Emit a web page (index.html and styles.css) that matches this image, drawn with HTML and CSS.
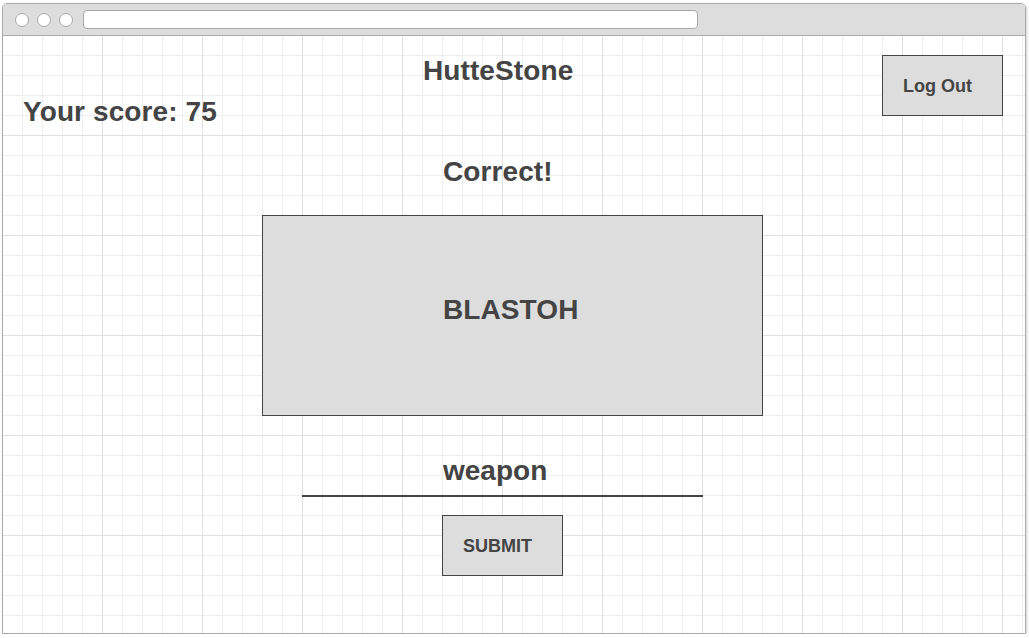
FILE: index.html
```html
<!DOCTYPE html>
<html lang="en">
<head>
<meta charset="utf-8">
<title>HutteStone</title>
<link rel="stylesheet" href="styles.css">
</head>
<body>
<div class="window">
  <div class="chrome">
    <span class="dot"></span>
    <span class="dot"></span>
    <span class="dot"></span>
    <div class="address"></div>
  </div>
  <div class="canvas">
    <header class="top">
      <h2 class="score">Your score: 75</h2>
      <h1 class="title">HutteStone</h1>
      <button class="btn logout" type="button">Log Out</button>
    </header>
    <main class="game">
      <p class="result">Correct!</p>
      <div class="card"><span class="word">BLASTOH</span></div>
      <input class="answer" type="text" value="weapon">
      <button class="btn submit" type="button">SUBMIT</button>
    </main>
  </div>
</div>
</body>
</html>
```

FILE: styles.css
```css
* { box-sizing: border-box; }

html, body {
  margin: 0;
  padding: 0;
  background: #ffffff;
}

body {
  font-family: "Liberation Sans", Arial, Helvetica, sans-serif;
  color: #444444;
}

.window {
  margin: 3px 0 0 2px;
  width: 1024px;
  height: 631px;
  border: 1px solid #aaaaaa;
  border-radius: 5px 5px 0 0;
  overflow: hidden;
  box-shadow: 1px 1px 3px rgba(0, 0, 0, 0.18);
  display: flex;
  flex-direction: column;
}

.chrome {
  height: 32px;
  flex: 0 0 32px;
  background: #dddddd;
  border-bottom: 1px solid #aaaaaa;
  display: flex;
  align-items: center;
  padding-left: 12px;
  gap: 8px;
}

.dot {
  width: 14px;
  height: 14px;
  border-radius: 50%;
  background: #ffffff;
  border: 1px solid #a8a8a8;
}

.address {
  margin-left: 2px;
  width: 615px;
  height: 19px;
  background: #ffffff;
  border: 1px solid #a8a8a8;
  border-radius: 4px;
}

.canvas {
  flex: 1 1 auto;
  background-color: #ffffff;
  background-image:
    linear-gradient(to right, #e0e0e0 1px, transparent 1px),
    linear-gradient(to bottom, #e0e0e0 1px, transparent 1px),
    linear-gradient(to right, #eeeeee 1px, transparent 1px),
    linear-gradient(to bottom, #eeeeee 1px, transparent 1px);
  background-size: 100px 100px, 100px 100px, 20px 20px, 20px 20px;
  background-position: -1px -1px, -1px -1px, -1px -1px, -1px -1px;
}

.top {
  display: grid;
  grid-template-columns: 400px 459px 121px;
  align-items: start;
  padding: 19px 22px 0 20px;
}

.score,
.title,
.result,
.word {
  margin: 0;
  font-size: 28px;
  line-height: 32px;
  font-weight: 700;
  color: #444444;
  letter-spacing: 0.1px;
}

.score { margin-top: 41px; }

.btn {
  display: flex;
  align-items: center;
  width: 121px;
  height: 61px;
  margin: 0;
  padding: 0 0 0 20px;
  border: 1px solid #444444;
  background: #dddddd;
  color: #444444;
  font-family: "Liberation Sans", Arial, Helvetica, sans-serif;
  font-size: 18px;
  line-height: 20px;
  font-weight: 700;
  text-align: left;
}

.logout { margin-top: 0; }

.game {
  margin-left: 259px;
  width: 501px;
  display: flex;
  flex-direction: column;
  align-items: flex-start;
}

.result { margin: 28px 0 0 181px; }

.card {
  margin-top: 27px;
  width: 501px;
  height: 201px;
  border: 1px solid #444444;
  background: #dddddd;
  padding: 78px 0 0 180px;
}

.word { display: block; }

.answer {
  margin: 38px 0 0 40px;
  width: 401px;
  height: 43px;
  padding: 1px 0 8px 141px;
  border: 0;
  border-bottom: 2px solid #444444;
  border-radius: 0;
  background: transparent;
  outline: none;
  color: #444444;
  font-family: "Liberation Sans", Arial, Helvetica, sans-serif;
  font-size: 28px;
  font-weight: 700;
}

.submit { margin: 18px 0 0 180px; }
```
